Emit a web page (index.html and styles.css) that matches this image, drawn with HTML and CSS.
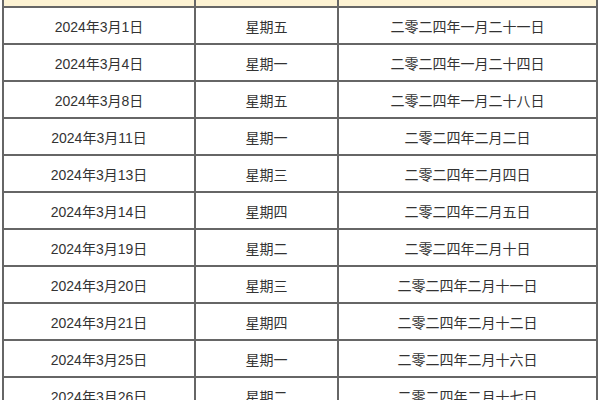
FILE: index.html
```html
<!DOCTYPE html>
<html lang="zh">
<head>
<meta charset="utf-8">
<link rel="stylesheet" href="styles.css">
</head>
<body>
<div class="wrap">
<table class="days">
<colgroup><col class="c1"><col class="c2"><col class="c3"></colgroup>
<tr class="head"><td></td><td></td><td></td></tr>
<tr><td>2024年3月1日</td><td>星期五</td><td>二零二四年一月二十一日</td></tr>
<tr><td>2024年3月4日</td><td>星期一</td><td>二零二四年一月二十四日</td></tr>
<tr><td>2024年3月8日</td><td>星期五</td><td>二零二四年一月二十八日</td></tr>
<tr><td>2024年3月11日</td><td>星期一</td><td>二零二四年二月二日</td></tr>
<tr><td>2024年3月13日</td><td>星期三</td><td>二零二四年二月四日</td></tr>
<tr><td>2024年3月14日</td><td>星期四</td><td>二零二四年二月五日</td></tr>
<tr><td>2024年3月19日</td><td>星期二</td><td>二零二四年二月十日</td></tr>
<tr><td>2024年3月20日</td><td>星期三</td><td>二零二四年二月十一日</td></tr>
<tr><td>2024年3月21日</td><td>星期四</td><td>二零二四年二月十二日</td></tr>
<tr><td>2024年3月25日</td><td>星期一</td><td>二零二四年二月十六日</td></tr>
<tr><td>2024年3月26日</td><td>星期二</td><td>二零二四年二月十七日</td></tr>
</table>
</div>
</body>
</html>
```
FILE: styles.css
```css
html, body {
  margin: 0;
  padding: 0;
  background: #ffffff;
  overflow: hidden;
}
.wrap {
  padding-left: 2px;
  width: 596px;
  height: 400px;
  overflow: hidden;
}
.days {
  border-collapse: collapse;
  table-layout: fixed;
  width: 594px;
  font-family: "Liberation Sans", "Noto Sans CJK SC", sans-serif;
  font-size: 14px;
  color: #333333;
}
.c1 { width: 192px; }
.c2 { width: 143px; }
.c3 { width: 259px; }
.days td {
  border: 2px solid #666666;
  height: 35px;
  padding: 0;
  text-align: center;
  vertical-align: middle;
  white-space: nowrap;
}
.days tr.head td {
  background: #fdf3d3;
  height: 6px;
  border-top: none;
}
```
